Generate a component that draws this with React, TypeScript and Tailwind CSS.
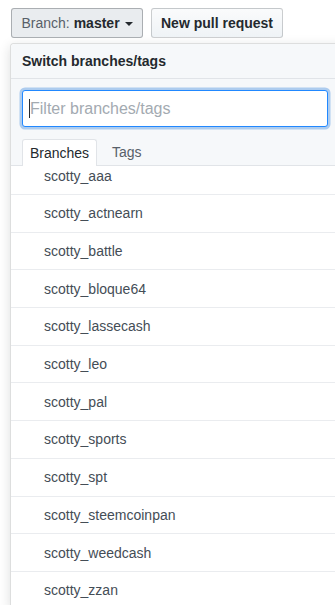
import React from 'react';

const branches: string[] = [
  'scotty_aaa',
  'scotty_actnearn',
  'scotty_battle',
  'scotty_bloque64',
  'scotty_lassecash',
  'scotty_leo',
  'scotty_pal',
  'scotty_sports',
  'scotty_spt',
  'scotty_steemcoinpan',
  'scotty_weedcash',
  'scotty_zzan',
];

const App: React.FC = () => {
  return (
    <div className="w-[335px] h-[605px] overflow-hidden bg-white font-['Liberation_Sans',Arial,sans-serif] text-[#24292e]">
      {/* top buttons */}
      <div className="flex gap-2 pt-2 pl-[11px]">
        <button className="w-[132px] h-[30px] flex items-center justify-center rounded-[3px] border border-[rgba(27,31,35,0.3)] bg-[#e9ecef] text-sm">
          <span className="text-[#586069]">Branch:</span>
          <span className="ml-1 font-bold text-[#24292e]">master</span>
          <span className="ml-[5px] mt-px inline-block w-0 h-0 border-x-4 border-x-transparent border-t-4 border-t-[#24292e]" />
        </button>
        <button className="w-[132px] h-[30px] flex items-center justify-center rounded-[3px] border border-[rgba(27,31,35,0.2)] bg-gradient-to-b from-[#fafbfc] to-[#eff3f6] text-sm font-bold text-[#24292e]">
          New pull request
        </button>
      </div>

      {/* dropdown panel */}
      <div className="mt-[5px] ml-[10px] w-[345px] rounded-tl-[4px] border border-[rgba(27,31,35,0.15)] bg-white shadow-[0_3px_12px_rgba(27,31,35,0.15)]">
        <div className="h-[35px] flex items-center px-[11px] bg-[#f6f8fa] border-b border-[#e1e4e8] text-sm font-bold text-[#24292e] rounded-tl-[4px]">
          Switch branches/tags
        </div>

        <div className="bg-[#f6f8fa] pt-[11px]">
          <div className="px-[11px]">
            <div className="relative w-[306px]">
              <input
                type="text"
                placeholder="Filter branches/tags"
                className="w-full h-[37px] px-[7px] rounded-[3px] border border-[#2188ff] bg-white text-base text-[#24292e] placeholder:text-[#a3aab1] outline-none shadow-[0_0_0_2.5px_rgba(3,102,214,0.3)]"
              />
              <span className="absolute left-[7px] top-[9px] w-px h-[19px] bg-[#24292e]" />
            </div>
          </div>

          <div className="mt-[12px] h-[27px] flex items-end px-[11px] border-b border-[#e1e4e8]">
            <div className="w-[75px] h-[27px] -mb-px flex items-center justify-center rounded-t-[3px] border border-b-0 border-[#e1e4e8] bg-white text-sm text-[#24292e]">
              Branches
            </div>
            <div className="ml-[15px] self-center text-sm text-[#586069]">Tags</div>
          </div>
        </div>

        {/* branch list, scrolled a bit */}
        <div className="h-[440px] overflow-hidden">
          <div className="-mt-[8.7px]">
            {branches.map((name) => (
              <div
                key={name}
                className="h-[37.7px] flex items-center pl-[33px] border-b border-[#eaecef] text-sm text-[#444d56]"
              >
                {name}
              </div>
            ))}
          </div>
        </div>
      </div>
    </div>
  );
};

export default App;
